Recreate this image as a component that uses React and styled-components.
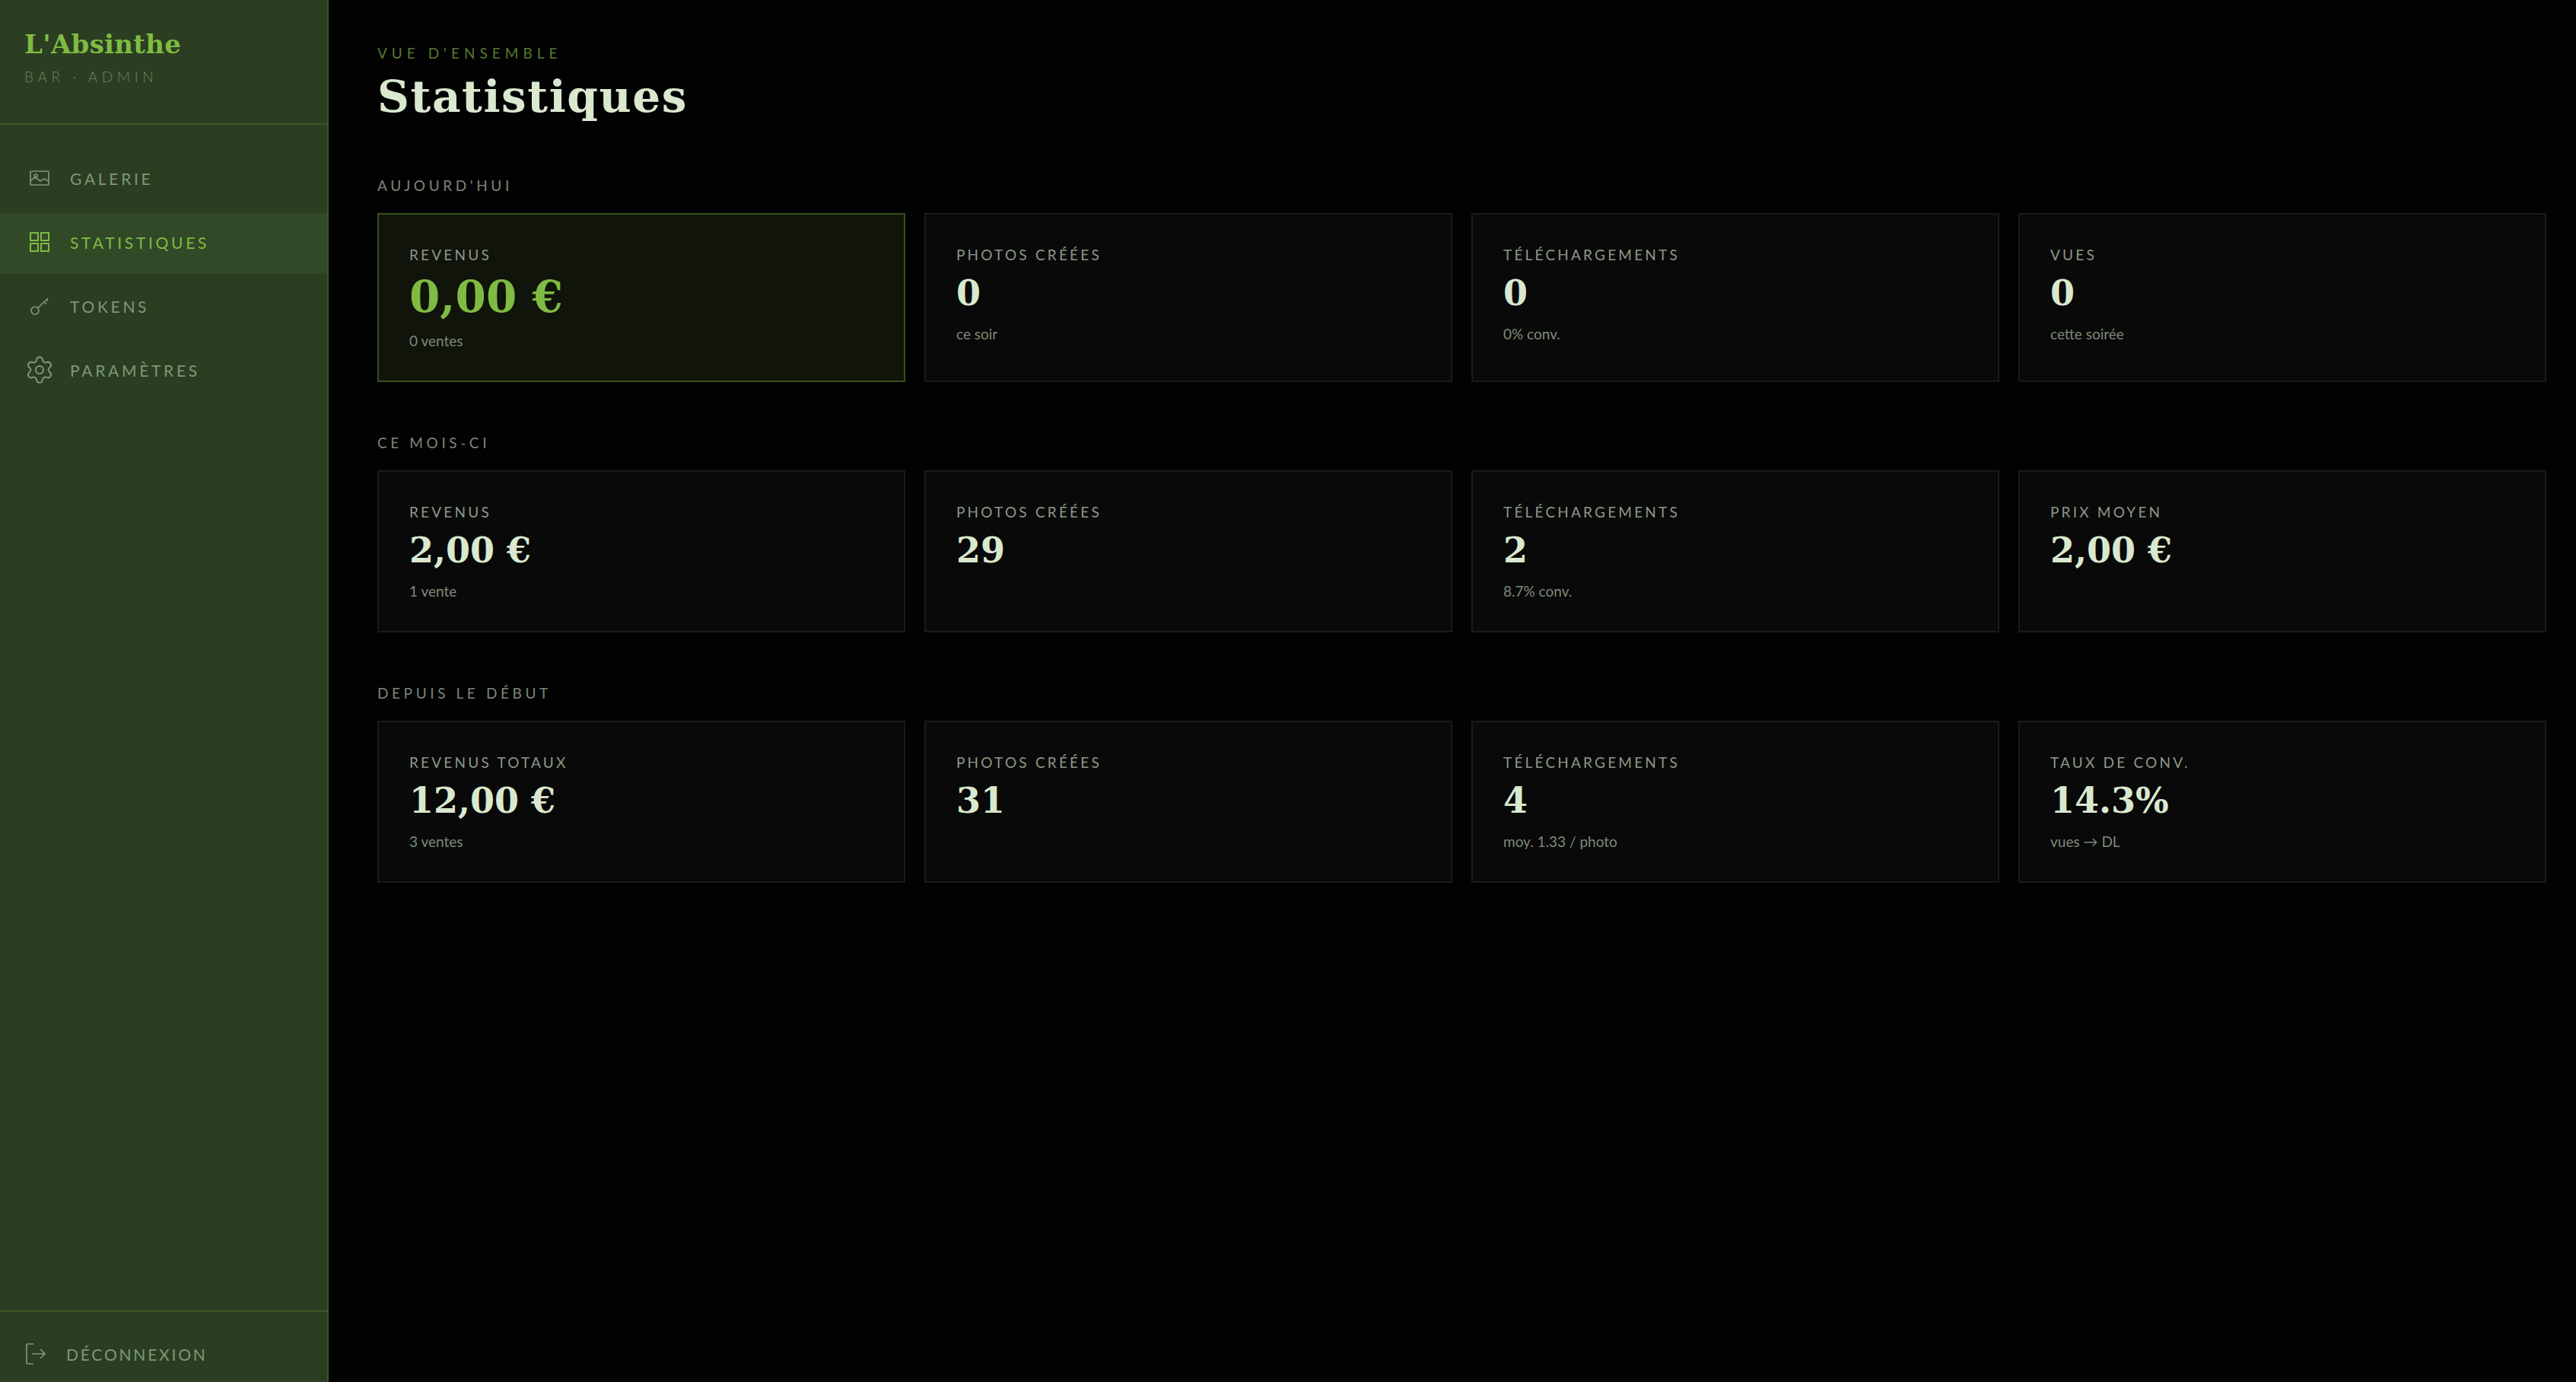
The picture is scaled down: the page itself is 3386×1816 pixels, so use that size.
import React from 'react'
import styled, { createGlobalStyle } from 'styled-components'
import { Settings } from 'lucide-react'

const GlobalStyle = createGlobalStyle`
	html, body, #root {
		margin: 0;
		height: 100%;
		background: #020202;
	}
	* {
		box-sizing: border-box;
	}
`;

const display = `"DejaVu Serif", "Liberation Serif", serif`;
const body = `Lato, "Noto Sans", sans-serif`;

const Shell = styled.div`
	display: flex;
	height: 1816px;
	font-family: ${body};
`;

const Sidebar = styled.aside`
	width: 432px;
	flex-shrink: 0;
	display: flex;
	flex-direction: column;
	background: #2b3e22;
	border-right: 2px solid #3a5726;
`;

const Brand = styled.div`
	height: 164px;
	padding: 34px 32px 0;
	border-bottom: 2px solid #3a5726;
`;

const Logo = styled.div`
	font-family: ${display};
	font-weight: 700;
	font-size: 34px;
	line-height: 48px;
	letter-spacing: 0.3px;
	color: #7fbb42;
`;

const BrandSub = styled.div`
	margin-top: 7px;
	font-size: 19px;
	font-weight: 300;
	letter-spacing: 5.6px;
	color: #6a8462;
`;

const Nav = styled.nav`
	flex: 1;
	display: flex;
	flex-direction: column;
	gap: 4px;
	padding-top: 32px;
`;

const NavItem = styled.a`
	height: 80px;
	display: flex;
	align-items: center;
	gap: 20px;
	padding: 0 0 4px 32px;
	font-size: 21px;
	letter-spacing: 3.7px;
	color: ${props => props.$active ? '#7fbb42' : '#7d9877'};
	background: ${props => props.$active ? '#314927' : 'transparent'};
`;

const IconBox = styled.span`
	width: 40px;
	height: 40px;
	display: flex;
	align-items: center;
	justify-content: center;
`;

const Logout = styled.div`
	height: 94px;
	display: flex;
	align-items: center;
	gap: 27px;
	padding: 18px 0 0 34px;
	border-top: 2px solid #3a5726;
	font-size: 21px;
	letter-spacing: 2.8px;
	color: #7d9877;
`;

const Main = styled.main`
	flex: 1;
	padding: 56px 39px 0 64px;
`;

const Eyebrow = styled.div`
	font-size: 19px;
	line-height: 28px;
	letter-spacing: 6px;
	color: #55792f;
`;

const Title = styled.h1`
	margin: 8px 0 68px;
	font-family: ${display};
	font-weight: 700;
	font-size: 58px;
	line-height: 70px;
	letter-spacing: 1.6px;
	color: #d9e8cf;
`;

const SectionLabel = styled.h2`
	margin: 0 0 22px;
	font-size: 19px;
	line-height: 28px;
	font-weight: 400;
	letter-spacing: 4.6px;
	color: #7c8679;
`;

const Section = styled.section`
	margin-bottom: 66px;
`;

const CardGrid = styled.div`
	display: grid;
	grid-template-columns: repeat(4, 1fr);
	gap: 25px;
`;

const Card = styled.div`
	height: ${props => props.$tall ? '222px' : '213px'};
	padding: 41px 40px 0;
	background: ${props => props.$accent ? '#10140b' : '#080908'};
	border: 2px solid ${props => props.$accent ? '#36501c' : '#171d12'};
`;

const CardLabel = styled.div`
	font-size: 19px;
	line-height: 24px;
	letter-spacing: 3.2px;
	color: #8e9889;
`;

const CardValue = styled.div`
	margin-top: ${props => props.$big ? '9px' : '10px'};
	font-family: ${display};
	font-weight: 700;
	font-size: ${props => props.$big ? '58px' : '46px'};
	line-height: ${props => props.$big ? '68px' : '56px'};
	color: ${props => props.$big ? '#7fbb42' : '#d9e8cf'};
`;

const CardSub = styled.div`
	margin-top: ${props => props.$big ? '12px' : '14px'};
	font-size: 19px;
	line-height: 24px;
	color: #7e8a78;
`;

const ImageIcon = () => (
	<svg width="26" height="20" viewBox="0 0 26 20" fill="none" stroke="#7d9877" strokeWidth="1.7">
		<rect x="1" y="1" width="24" height="18" rx="1" />
		<circle cx="8" cy="7" r="2" />
		<path d="M1 13l6-4 7 5 5-3 6 3" />
	</svg>
);

const GridIcon = () => (
	<svg width="26" height="26" viewBox="0 0 26 26" fill="none" stroke="#7fbb42" strokeWidth="2">
		<rect x="1" y="1" width="10" height="10" />
		<rect x="15" y="1" width="10" height="10" />
		<rect x="1" y="15" width="10" height="10" />
		<rect x="15" y="15" width="10" height="10" />
	</svg>
);

const KeyIcon = () => (
	<svg width="26" height="26" viewBox="0 0 26 26" fill="none" stroke="#7d9877" strokeWidth="1.7">
		<circle cx="7" cy="19" r="5" />
		<path d="M11 15.5L24 3M19 7.5l3 3M22 4.5l2 2" />
	</svg>
);

const LogoutIcon = () => (
	<svg width="26" height="28" viewBox="0 0 26 28" fill="none" stroke="#7d9877" strokeWidth="1.7">
		<path d="M10 1H3a2 2 0 0 0-2 2v22a2 2 0 0 0 2 2h7" />
		<path d="M8 14h17M19 8l6 6-6 6" />
	</svg>
);

const navItems = [
	{ label: 'GALERIE', icon: <ImageIcon /> },
	{ label: 'STATISTIQUES', icon: <GridIcon />, active: true },
	{ label: 'TOKENS', icon: <KeyIcon /> },
	{ label: 'PARAMÈTRES', icon: <Settings size={40} strokeWidth={1.2} color="#7d9877" /> },
];

const sections = [
	{
		title: "AUJOURD'HUI",
		tall: true,
		cards: [
			{ label: 'REVENUS', value: '0,00 €', sub: '0 ventes', accent: true },
			{ label: 'PHOTOS CRÉÉES', value: '0', sub: 'ce soir' },
			{ label: 'TÉLÉCHARGEMENTS', value: '0', sub: '0% conv.' },
			{ label: 'VUES', value: '0', sub: 'cette soirée' },
		],
	},
	{
		title: 'CE MOIS-CI',
		cards: [
			{ label: 'REVENUS', value: '2,00 €', sub: '1 vente' },
			{ label: 'PHOTOS CRÉÉES', value: '29' },
			{ label: 'TÉLÉCHARGEMENTS', value: '2', sub: '8.7% conv.' },
			{ label: 'PRIX MOYEN', value: '2,00 €' },
		],
	},
	{
		title: 'DEPUIS LE DÉBUT',
		cards: [
			{ label: 'REVENUS TOTAUX', value: '12,00 €', sub: '3 ventes' },
			{ label: 'PHOTOS CRÉÉES', value: '31' },
			{ label: 'TÉLÉCHARGEMENTS', value: '4', sub: 'moy. 1.33 / photo' },
			{ label: 'TAUX DE CONV.', value: '14.3%', sub: 'vues → DL' },
		],
	},
];

export default function App() {
	return (
		<Shell>
			<GlobalStyle />
			<Sidebar>
				<Brand>
					<Logo>L'Absinthe</Logo>
					<BrandSub>BAR · ADMIN</BrandSub>
				</Brand>
				<Nav>
					{navItems.map(item => (
						<NavItem key={item.label} $active={item.active}>
							<IconBox>{item.icon}</IconBox>
							{item.label}
						</NavItem>
					))}
				</Nav>
				<Logout>
					<LogoutIcon />
					DÉCONNEXION
				</Logout>
			</Sidebar>
			<Main>
				<Eyebrow>VUE D'ENSEMBLE</Eyebrow>
				<Title>Statistiques</Title>
				{sections.map(section => (
					<Section key={section.title}>
						<SectionLabel>{section.title}</SectionLabel>
						<CardGrid>
							{section.cards.map(card => (
								<Card key={card.label} $accent={card.accent} $tall={section.tall}>
									<CardLabel>{card.label}</CardLabel>
									<CardValue $big={card.accent}>{card.value}</CardValue>
									{card.sub && <CardSub $big={card.accent}>{card.sub}</CardSub>}
								</Card>
							))}
						</CardGrid>
					</Section>
				))}
			</Main>
		</Shell>
	);
}
